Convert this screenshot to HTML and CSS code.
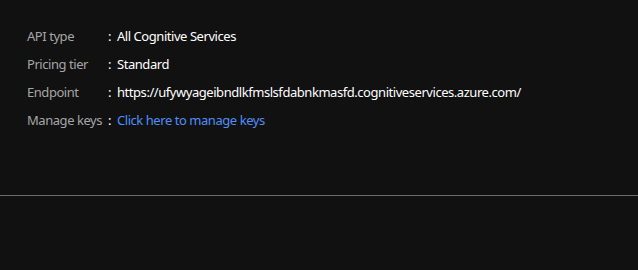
FILE: index.html
```html
<!DOCTYPE html>
<html>
<head>
<meta charset="utf-8">
<link rel="stylesheet" href="styles.css">
</head>
<body>
<div class="panel">
  <dl class="props">
    <div class="row"><dt class="label">API type</dt><dd class="value"><span class="colon">:</span>All Cognitive Services</dd></div>
    <div class="row"><dt class="label">Pricing tier</dt><dd class="value"><span class="colon">:</span>Standard</dd></div>
    <div class="row"><dt class="label">Endpoint</dt><dd class="value"><span class="colon">:</span>https://ufywyageibndlkfmslsfdabnkmasfd.cognitiveservices.azure.com/</dd></div>
    <div class="row"><dt class="label">Manage keys</dt><dd class="value"><span class="colon">:</span><a class="link" href="#">Click here to manage keys</a></dd></div>
  </dl>
</div>
<hr class="divider">
</body>
</html>
```
FILE: styles.css
```css
html, body {
  margin: 0;
  padding: 0;
  background: #111111;
  height: 100%;
}
body {
  font-family: "Noto Sans", "Open Sans", sans-serif;
  font-size: 13px;
  letter-spacing: -0.45px;
  color: #ffffff;
}
.panel {
  padding: 22px 0 0 27px;
  height: 195px;
  box-sizing: border-box;
}
.props {
  margin: 0;
  display: grid;
  grid-template-columns: 81px auto;
}
.row {
  display: contents;
}
.label {
  color: #a6a6a6;
  line-height: 28px;
  white-space: nowrap;
}
.value {
  margin: 0;
  line-height: 28px;
  white-space: nowrap;
  color: #ffffff;
}
.colon {
  display: inline-block;
  width: 9px;
  color: #ffffff;
}
.link {
  color: #4f8ff7;
  text-decoration: none;
}
.divider {
  margin: 0;
  border: none;
  height: 1px;
  background: #6b6b6b;
}
```
